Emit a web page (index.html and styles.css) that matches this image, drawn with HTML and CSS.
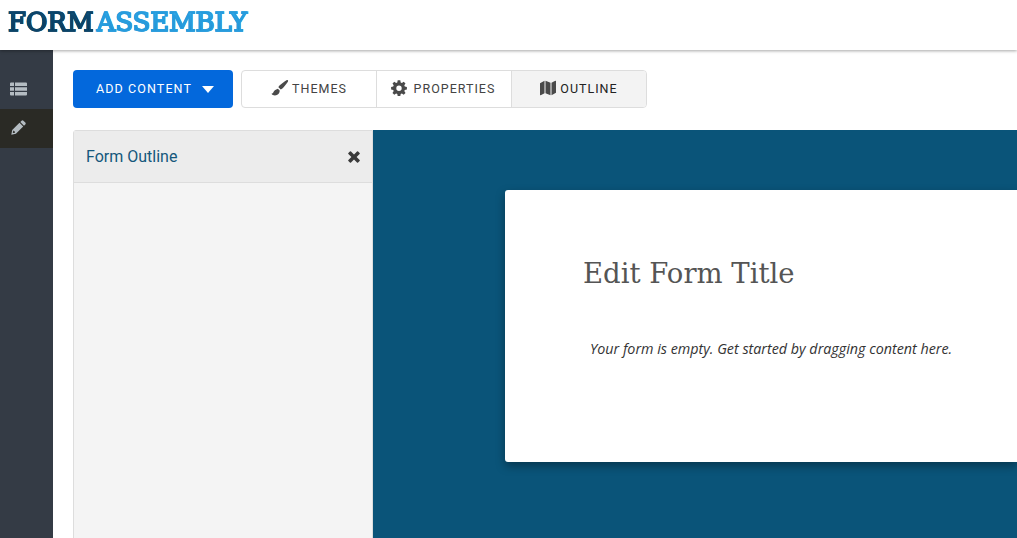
FILE: index.html
```html
<!DOCTYPE html>
<html lang="en">
<head>
    <meta charset="UTF-8">
    <title>FormAssembly - Form Builder</title>
    <link rel="stylesheet" href="styles.css">
</head>
<body>

    <!-- Top bar -->
    <div class="topbar">
        <a class="logo" href="#"><span class="logo-form">FORM</span><span class="logo-assembly">ASSEMBLY</span></a>
    </div>

    <div class="page">
        <!-- Sidebar -->
        <div class="sidebar">
            <a class="side-item" href="#">
                <svg width="17" height="14" viewBox="0 0 17 14"><path fill="#b4bcc2" d="M0 1.5A1 1 0 0 1 1 .5h3v3.4H0zM5 .5h11a1 1 0 0 1 1 1v2.400H5zM0 5.200h4v3.600H0zM5 5.200h12v3.600H5zM0 10.100h4v3.400H1a1 1 0 0 1-1-1zM5 10.100h12v2.400a1 1 0 0 1-1 1H5z"/></svg>
            </a>
            <a class="side-item active" href="#">
                <svg width="15" height="15" viewBox="0 0 15 15"><path fill="#b4bcc2" d="M10.600.7a1.300 1.300 0 0 1 1.800 0l1.900 1.900a1.300 1.300 0 0 1 0 1.800l-1.300 1.300-3.700-3.700zM8.500 2.800l3.700 3.700-7.300 7.300-4.600 1 .9-4.700zM2.300 10.300l-.5 2.800 2.100-.4.100-1.300-1.200-.1z"/></svg>
            </a>
        </div>

        <!-- Main Content -->
        <div class="main-content">
            <div class="toolbar">
                <button class="add-btn"><span>ADD CONTENT</span> <span class="caret"></span></button>
                <div class="tabs">
                    <a class="tab" href="#">
                        <svg width="18" height="16" viewBox="0 0 17 16"><path fill="#4a4a4a" d="M16.300.3c.5.400.4 1-.1 1.700-1.500 2.100-3.800 5-5.300 6.500-.5.500-1.100.8-1.600 1l-2.400-2.300c.2-.6.600-1.200 1.100-1.700C9.600 3.900 13.300 1.500 15 .3c.500-.3 1-.3 1.300 0zM6.400 8.800l1.800 1.700c0 2.700-1.800 4.900-4.700 4.900-1.600 0-3-.7-3.500-1.700.9-.1 1.600-.5 1.900-1.400.5-1.600 1.900-2.700 4.500-3.500z"/></svg>
                        <span>THEMES</span>
                    </a>
                    <a class="tab gear" href="#">
                        <svg width="16" height="16" viewBox="0 0 16 16"><path fill="#4a4a4a" fill-rule="evenodd" d="M6.700.3h2.600l.4 2.100 1.200.5 1.800-1.200 1.800 1.800-1.200 1.800.5 1.200 2.100.4v2.600l-2.100.4-.5 1.200 1.200 1.800-1.800 1.800-1.800-1.200-1.200.5-.4 2.100H6.700l-.4-2.100-1.200-.5-1.800 1.200-1.800-1.800 1.200-1.800-.5-1.200-2.100-.4V6.900l2.100-.4.5-1.200-1.200-1.800 1.800-1.800 1.800 1.200 1.200-.5zM8 5.500a2.700 2.700 0 1 0 0 5.400 2.700 2.700 0 0 0 0-5.400z"/></svg>
                        <span>PROPERTIES</span>
                    </a>
                    <a class="tab current" href="#">
                        <svg width="16" height="16" viewBox="0 0 16 16"><path fill="#4a4a4a" d="M0 3.300 4.500.8v12.400L.7 15.200a.5.500 0 0 1-.7-.4zM5.500.8l5 2v12.400l-5-2zM11.500 2.800 15.300.8a.5.500 0 0 1 .7.400v11.500l-4.500 2.500z"/></svg>
                        <span>OUTLINE</span>
                    </a>
                </div>
            </div>

            <div class="workspace">
                <!-- Outline panel -->
                <div class="outline">
                    <div class="outline-head">
                        <span class="outline-title">Form Outline</span>
                        <svg width="12" height="12" viewBox="0 0 12 12"><path fill="#3a3a3a" d="M3 .4 6 3.400 9 .4a.8.800 0 0 1 1.100 0l1.500 1.500a.8.800 0 0 1 0 1.100L8.600 6l3 3a.8.800 0 0 1 0 1.100l-1.500 1.500a.8.800 0 0 1-1.100 0l-3-3-3 3a.8.800 0 0 1-1.100 0L.4 10.100a.8.800 0 0 1 0-1.100l3-3-3-3a.8.800 0 0 1 0-1.100L1.900.4A.8.800 0 0 1 3 .4z"/></svg>
                    </div>
                </div>

                <!-- Form canvas -->
                <div class="canvas">
                    <div class="form-card">
                        <h1>Edit Form Title</h1>
                        <p>Your form is empty. Get started by dragging content here.</p>
                    </div>
                </div>
            </div>
        </div>
    </div>

</body>
</html>
```

FILE: styles.css
```css
* {
    margin: 0;
    padding: 0;
    box-sizing: border-box;
    font-family: Roboto, Arial, sans-serif;
}
html, body {
    height: 538px;
    overflow: hidden;
    background-color: #fff;
}
a {
    text-decoration: none;
}
.topbar {
    position: relative;
    z-index: 2;
    height: 50px;
    padding: 7px 0 0 8px;
    background-color: #fff;
    box-shadow: 0 1px 3px rgba(0, 0, 0, 0.35);
}
.logo {
    display: flex;
    font-size: 26px;
    line-height: 30px;
}
.logo span {
    font-family: "DejaVu Serif", serif;
    background-clip: text;
    -webkit-background-clip: text;
    color: transparent;
}
.logo-form {
    -webkit-text-stroke: 1.400px #0b456a;
    background-image: linear-gradient(#0d4f78 20%, #0a3550 80%);
}
.logo-assembly {
    margin-left: 3px;
    letter-spacing: -0.1px;
    -webkit-text-stroke: 1.400px #279cdd;
    background-image: linear-gradient(#2fa9e8 20%, #1f8fd0 80%);
}
.page {
    display: flex;
    height: 488px;
}
.sidebar {
    width: 53px;
    flex-shrink: 0;
    padding-top: 20px;
    background-color: #343b45;
}
.side-item {
    display: flex;
    align-items: center;
    justify-content: center;
    height: 39px;
}
.side-item svg {
    margin: 0 16px 2px 0;
}
.side-item.active {
    background-color: #2a2a25;
}
.main-content {
    flex: 1;
    min-width: 0;
    padding: 20px 0 0 20px;
}
.toolbar {
    display: flex;
    gap: 8px;
    height: 38px;
}
.add-btn {
    display: flex;
    align-items: center;
    justify-content: center;
    gap: 10px;
    width: 160px;
    padding: 0 0 2px 4px;
    border: none;
    border-radius: 4px;
    background-color: #0368dc;
    color: #fff;
    font-size: 12.500px;
    letter-spacing: 1.100px;
}
.caret {
    margin-top: 3px;
    border-left: 6px solid transparent;
    border-right: 6px solid transparent;
    border-top: 7px solid #fff;
}
.tabs {
    display: flex;
    width: 406px;
    border: 1px solid #ddd;
    border-radius: 4px;
    overflow: hidden;
}
.tab {
    width: 135px;
    display: flex;
    align-items: center;
    justify-content: center;
    gap: 3px;
    padding-bottom: 2px;
    color: #444;
    font-size: 12.500px;
    letter-spacing: 1px;
    border-right: 1px solid #ddd;
}
.tab:last-child {
    flex: 1;
    border-right: none;
}
.tab.gear {
    gap: 7px;
    padding-right: 2px;
}
.tab.current {
    gap: 4px;
    background-color: #f3f3f3;
    color: #222;
}
.workspace {
    display: flex;
    margin-top: 22px;
    height: 420px;
}
.outline {
    width: 300px;
    flex-shrink: 0;
    background-color: #f4f4f4;
    border: 1px solid #ddd;
    border-radius: 3px 0 0 0;
}
.outline-head {
    display: flex;
    justify-content: space-between;
    align-items: center;
    height: 52px;
    padding: 0 12px 0 12px;
    background-color: #ececec;
    border-bottom: 1px solid #ddd;
}
.outline-title {
    font-size: 16px;
    color: #15587c;
}
.canvas {
    flex: 1;
    min-width: 0;
    padding: 60px 0 0 132px;
    background-color: #0a5479;
}
.form-card {
    width: 512px;
    height: 272px;
    padding: 64px 0 0 78px;
    background-color: #fff;
    border-radius: 3px 0 0 3px;
    box-shadow: 0 4px 10px rgba(0, 0, 0, 0.35);
}
.form-card h1 {
    font-family: "DejaVu Serif", "Liberation Serif", serif;
    font-size: 27.500px;
    line-height: 38px;
    font-weight: normal;
    color: #555;
}
.form-card p {
    margin: 47px 0 0 7px;
    font-family: "Open Sans", sans-serif;
    font-size: 14.300px;
    line-height: 20px;
    font-style: italic;
    color: #333;
    white-space: nowrap;
}
```
